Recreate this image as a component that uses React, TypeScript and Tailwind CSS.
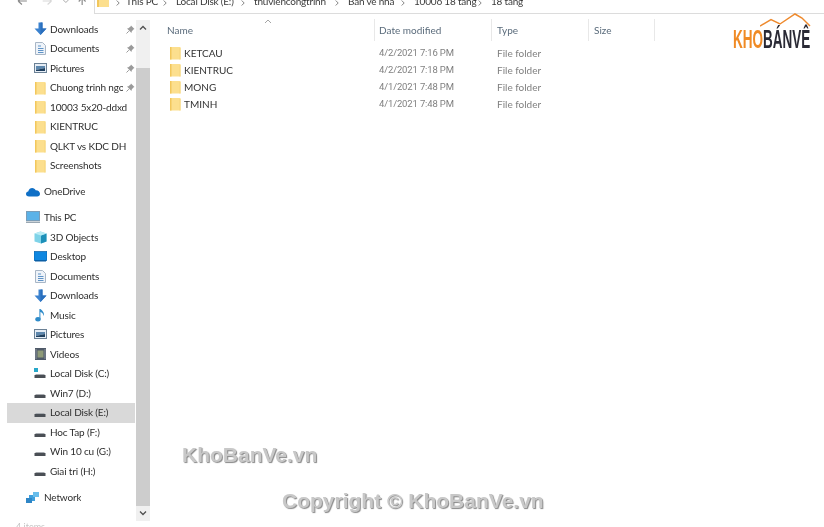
import React from "react";

function Folder() {
  return (
    <svg width="11" height="14" viewBox="0 0 11 14" className="shrink-0">
      <rect x="0" y="1" width="10.5" height="12.5" fill="#fcdf8e" />
      <rect x="0" y="1" width="1.5" height="12.5" fill="#f2c75c" />
      <rect x="9.5" y="2" width="1" height="11.5" fill="#f6d67c" />
    </svg>
  );
}

function Pin() {
  return (
    <svg width="9" height="9" viewBox="0 0 9 9">
      <path d="M5 0.5 L8.5 4 L7.4 4.4 L5.7 6.6 L5.5 8 L1 3.5 L2.4 3.3 L4.6 1.6 Z" fill="#9a9a9a" />
      <path d="M2.8 6.2 L0.5 8.5" stroke="#9a9a9a" strokeWidth="1" />
    </svg>
  );
}

function DownloadIcon() {
  return (
    <svg width="13" height="14" viewBox="0 0 13 14">
      <path d="M4.5 0.5 H8.5 V6.5 H12.5 L6.5 13 L0.5 6.5 H4.5 Z" fill="#3b82cf" />
      <path d="M6.5 0.5 H8.5 V6.5 H12.5 L6.5 13 Z" fill="#2a6fbd" />
    </svg>
  );
}

function DocumentIcon() {
  return (
    <svg width="11" height="13" viewBox="0 0 11 13">
      <path d="M0.5 0.5 H7.5 L10.5 3.5 V12.5 H0.5 Z" fill="#eef3f9" stroke="#a8b6c6" />
      <path d="M3 4 H6 M3 6.5 H8.5 M3 8.5 H8.5 M3 10.5 H8.5" stroke="#5f93c7" strokeWidth="1" />
    </svg>
  );
}

function PictureIcon() {
  return (
    <svg width="13" height="11" viewBox="0 0 13 11">
      <rect x="0.5" y="0.5" width="12" height="9" fill="#e6edf5" stroke="#6b8195" />
      <path d="M2 3 H11 V5 L2 7 Z" fill="#5d87ad" />
      <path d="M2 7 L11 5 V8 H2 Z" fill="#1f3f5e" />
    </svg>
  );
}

function CloudIcon() {
  return (
    <svg width="14" height="10" viewBox="0 0 14 10">
      <path d="M3 9.5 C1 9.5 0 8.3 0 7 C0 5.6 1 4.8 2.2 4.6 C2.8 2 4.6 1 6.2 1 C7.8 1 9 2 9.6 3.2 C12 3 14 4.6 14 6.8 C14 8.5 12.8 9.5 11.2 9.5 Z" fill="#0f6fc6" />
    </svg>
  );
}

function MonitorIcon() {
  return (
    <svg width="14" height="13" viewBox="0 0 14 13">
      <rect x="0.5" y="0.5" width="13" height="9" fill="#5bb2e8" stroke="#7a9db8" />
      <rect x="0" y="10.5" width="14" height="1.5" fill="#9aa7b2" />
    </svg>
  );
}

function CubeIcon() {
  return (
    <svg width="13" height="13" viewBox="0 0 13 13">
      <path d="M6.5 0.5 L12.5 2.5 V10.5 L7 12.5 L0.5 10.5 V2.5 Z" fill="#7fd3e8" />
      <path d="M7 4.5 L12.5 2.5 V10.5 L7 12.5 Z" fill="#1c8fb8" />
      <path d="M0.5 2.5 L6.5 0.5 L12.5 2.5 L7 4.5 Z" fill="#b9ecf5" />
    </svg>
  );
}

function DesktopIcon() {
  return (
    <svg width="13" height="11" viewBox="0 0 13 11">
      <rect x="0" y="0.5" width="13" height="9" fill="#0f87e0" stroke="#0b5fa5" strokeWidth="0.7" />
      <rect x="1" y="9" width="11" height="1.5" fill="#0b5fa5" />
    </svg>
  );
}

function MusicIcon() {
  return (
    <svg width="10" height="14" viewBox="0 0 10 14">
      <ellipse cx="3" cy="11.3" rx="2.7" ry="2.2" fill="#2f8bc9" />
      <path d="M4.4 1 V11 H5.4 V4 C7 4.5 8.3 5.8 8.6 8 C9.8 5.5 8 3 5.4 1 Z" fill="#2f8bc9" />
    </svg>
  );
}

function VideoIcon() {
  return (
    <svg width="11" height="12" viewBox="0 0 11 12">
      <rect x="0" y="0" width="11" height="12" fill="#4f5a68" />
      <rect x="2.5" y="2.5" width="6" height="7" fill="#8e9a78" />
      <path d="M1 1.5 V10.5 M10 1.5 V10.5" stroke="#c7ccd2" strokeWidth="1" strokeDasharray="1 1" />
    </svg>
  );
}

function DriveIcon({ windows }: { windows?: boolean }) {
  return (
    <svg width="12" height="11" viewBox="0 0 12 11">
      {windows && <rect x="0" y="0" width="4" height="4" fill="#27a7c9" />}
      <path d="M1 7 L2 6 H10 L11 7 Z" fill="#a9adb2" />
      <rect x="0.5" y="7" width="11" height="3" fill="#4a4f55" />
    </svg>
  );
}

function NetworkIcon() {
  return (
    <svg width="14" height="13" viewBox="0 0 14 13">
      <path d="M3 4 H9 V10 H3 Z" fill="#3f9fdc" />
      <path d="M0 7 H6 V12 H0 Z" fill="#2f86c6" />
      <path d="M7 1 H13 V6 H7 Z" fill="#68bdeb" />
    </svg>
  );
}

function Chevron() {
  return (
    <svg width="4" height="6" viewBox="0 0 4 6" className="shrink-0">
      <path d="M0.7 0.5 L3.2 3 L0.7 5.5" stroke="#777777" strokeWidth="0.9" fill="none" />
    </svg>
  );
}

function NavRow({
  icon,
  label,
  pin,
  top,
  selected,
  mt,
}: {
  icon: React.ReactNode;
  label: string;
  pin?: boolean;
  top?: boolean;
  selected?: boolean;
  mt?: boolean;
}) {
  return (
    <div
      className={`relative flex items-center h-[19.5px] ${top ? "pl-[19px]" : "pl-[26px]"} ${selected ? "bg-[#d9d9d9]" : ""} ${mt ? "mt-[6.5px]" : ""}`}
    >
      <div className={`flex items-center justify-center w-[14px] shrink-0 ${top ? "mr-[4px]" : "mr-[3px]"}`}>{icon}</div>
      <span className={`whitespace-nowrap overflow-hidden text-[10px] tracking-[-0.15px] text-[#2e2e2e] ${pin ? "max-w-[73px]" : "max-w-[79px]"}`}>{label}</span>
      {pin && (
        <span className="absolute right-0 top-[5px]">
          <Pin />
        </span>
      )}
    </div>
  );
}

const crumbs = [
  { label: "This PC", width: "w-[50px]" },
  { label: "Local Disk (E:)", width: "w-[78px]" },
  { label: "thuviencongtrinh", width: "w-[94px]" },
  { label: "Ban ve nha", width: "w-[66px]" },
  { label: "10006 18 tang", width: "w-[77px]" },
  { label: "18 tang", width: "" },
];

const files = [
  { name: "KETCAU", date: "4/2/2021 7:16 PM" },
  { name: "KIENTRUC", date: "4/2/2021 7:18 PM" },
  { name: "MONG", date: "4/1/2021 7:48 PM" },
  { name: "TMINH", date: "4/1/2021 7:48 PM" },
];

export default function App() {
  return (
    <div className="relative w-[824px] h-[527px] overflow-hidden bg-white font-['Lato','Open_Sans',sans-serif] blur-[0.35px]">
      {/* toolbar, cut off by the top of the picture */}
      <div className="flex h-[14px] items-end">
        <div className="flex w-[94px] h-[14px] items-center pl-[17px]">
          <svg width="78" height="12" viewBox="0 0 78 12" className="-mt-[8px]">
            <path d="M1 4 H10 M1 4 L5 0.5 M1 4 L5 7.5" stroke="#8a8a8a" strokeWidth="1.2" fill="none" />
            <path d="M26 4 H35 M35 4 L31 0.5 M35 4 L31 7.5" stroke="#d8d8d8" strokeWidth="1.2" fill="none" />
            <path d="M47 3 L49.5 5.5 L52 3" stroke="#a8a8a8" strokeWidth="1" fill="none" />
            <path d="M66 8 V1 M66 1 L62.5 4.5 M66 1 L69.5 4.5" stroke="#8a8a8a" strokeWidth="1.2" fill="none" />
          </svg>
        </div>
        <div className="flex flex-1 h-[14px] items-start border-l border-b border-[#dcdcdc] pl-[2px] overflow-hidden">
          <svg width="12" height="7" viewBox="0 0 12 7" className="mr-[7px] shrink-0">
            <rect x="0" y="0" width="12" height="7" fill="#fcdf8e" />
            <rect x="0" y="0" width="2" height="7" fill="#f2c75c" />
          </svg>
          <div className="mr-[6px]">
            <Chevron />
          </div>
          <div className="flex -mt-[6px] text-[10px] tracking-[-0.2px] leading-[14px] text-[#3a3a3a] whitespace-nowrap">
            {crumbs.map((c, i) => (
              <span key={c.label} className={`flex shrink-0 justify-between pr-[9px] ${c.width}`}>
                {c.label}
                {i < crumbs.length - 1 && (
                  <span className="mt-[6px]">
                    <Chevron />
                  </span>
                )}
              </span>
            ))}
          </div>
        </div>
      </div>

      <div className="flex h-[507px]">
        {/* navigation pane */}
        <div className="flex w-[150px] shrink-0 pl-[7px]">
          <div className="w-[129px] pt-[5.5px]">
            <NavRow icon={<DownloadIcon />} label="Downloads" pin />
            <NavRow icon={<DocumentIcon />} label="Documents" pin />
            <NavRow icon={<PictureIcon />} label="Pictures" pin />
            <NavRow icon={<Folder />} label="Chuong trinh ngoai" pin />
            <NavRow icon={<Folder />} label="10003 5x20-ddxd" />
            <NavRow icon={<Folder />} label="KIENTRUC" />
            <NavRow icon={<Folder />} label="QLKT vs KDC DH" />
            <NavRow icon={<Folder />} label="Screenshots" />
            <NavRow icon={<CloudIcon />} label="OneDrive" top mt />
            <NavRow icon={<MonitorIcon />} label="This PC" top mt />
            <NavRow icon={<CubeIcon />} label="3D Objects" />
            <NavRow icon={<DesktopIcon />} label="Desktop" />
            <NavRow icon={<DocumentIcon />} label="Documents" />
            <NavRow icon={<DownloadIcon />} label="Downloads" />
            <NavRow icon={<MusicIcon />} label="Music" />
            <NavRow icon={<PictureIcon />} label="Pictures" />
            <NavRow icon={<VideoIcon />} label="Videos" />
            <NavRow icon={<DriveIcon windows />} label="Local Disk (C:)" />
            <NavRow icon={<DriveIcon />} label="Win7 (D:)" />
            <NavRow icon={<DriveIcon />} label="Local Disk (E:)" selected />
            <NavRow icon={<DriveIcon />} label="Hoc Tap (F:)" />
            <NavRow icon={<DriveIcon />} label="Win 10 cu (G:)" />
            <NavRow icon={<DriveIcon />} label="Giai tri (H:)" />
            <NavRow icon={<NetworkIcon />} label="Network" top mt />
          </div>
          {/* scrollbar */}
          <div className="w-[14px] ml-[1px] mt-[6px] h-[501px] flex flex-col bg-[#f0f0f0]">
            <div className="flex h-[48px] justify-center pt-[5px]">
              <svg width="8" height="5" viewBox="0 0 8 5">
                <path d="M1 4.5 L4 1.5 L7 4.5" stroke="#505050" strokeWidth="1.3" fill="none" />
              </svg>
            </div>
            <div className="flex-1 bg-[#cdcdcd]" />
            <div className="flex h-[15px] justify-center items-center">
              <svg width="8" height="5" viewBox="0 0 8 5">
                <path d="M1 0.5 L4 3.5 L7 0.5" stroke="#505050" strokeWidth="1.3" fill="none" />
              </svg>
            </div>
          </div>
        </div>

        {/* file list */}
        <div className="flex-1 min-w-0 pl-[17px]">
          <div className="relative flex h-[27px] items-center pt-[5px] text-[10px] text-[#5a6b7b]">
            <span className="w-[207px]">Name</span>
            <div className="h-[22px] w-px bg-[#e8e8e8] mr-[4px]" />
            <span className="w-[112px]">Date modified</span>
            <div className="h-[22px] w-px bg-[#e8e8e8] mr-[5px]" />
            <span className="w-[91px]">Type</span>
            <div className="h-[22px] w-px bg-[#e8e8e8] mr-[5px]" />
            <span className="w-[60px]">Size</span>
            <div className="h-[22px] w-px bg-[#e8e8e8]" />
            <svg width="8" height="5" viewBox="0 0 8 5" className="absolute left-[97px] top-[5px]">
              <path d="M1 4 L4 1 L7 4" stroke="#a5a5a5" strokeWidth="1" fill="none" />
            </svg>
          </div>
          <div className="pt-[3.5px]">
            {files.map((f) => (
              <div key={f.name} className="flex h-[17px] items-center text-[10px]">
                <div className="flex items-center w-[212px] pl-[3px]">
                  <div className="mr-[3px] flex">
                    <Folder />
                  </div>
                  <span className="text-[#333333]">{f.name}</span>
                </div>
                <span className="w-[118px] font-['Roboto',sans-serif] text-[9.5px] tracking-[-0.15px] text-[#808080]">{f.date}</span>
                <span className="text-[#808080]">File folder</span>
              </div>
            ))}
          </div>
        </div>
      </div>

      {/* status bar, cut off by the bottom of the picture */}
      <div className="h-[6px] pl-[16px] text-[9px] leading-[12px] text-[#c4c4c4]">4 items</div>

      {/* KhoBanVe logo over the page */}
      <div className="absolute left-[733px] top-[13px] w-[80px] h-[36px]">
        <svg width="52" height="16" viewBox="0 0 52 16" className="absolute left-[27px] top-0">
          <path d="M0 13 L11 6.5 L20 11 L35 1 L42 5 L50 13" stroke="#ee8a2e" strokeWidth="1.5" fill="none" />
        </svg>
        <div className="absolute left-0 top-[14px] flex text-[26px] leading-[24px] font-bold scale-x-[0.52] origin-left whitespace-nowrap font-['Liberation_Sans',sans-serif]">
          <span className="text-[#f08a24]">KHO</span>
          <span className="text-[#2a2a35]">BÁNVÊ</span>
        </div>
      </div>

      {/* watermarks */}
      <div className="absolute left-[182px] top-[443px] text-[21px] leading-[24px] font-bold font-['Liberation_Sans',sans-serif] text-[#c8c8c8] [text-shadow:1px_1px_1px_#888888]">
        KhoBanVe.vn
      </div>
      <div className="absolute left-[282px] top-[489px] text-[21px] leading-[24px] font-bold font-['Liberation_Sans',sans-serif] text-[#c8c8c8] [text-shadow:1px_1px_1px_#888888]">
        Copyright © KhoBanVe.vn
      </div>
    </div>
  );
}
